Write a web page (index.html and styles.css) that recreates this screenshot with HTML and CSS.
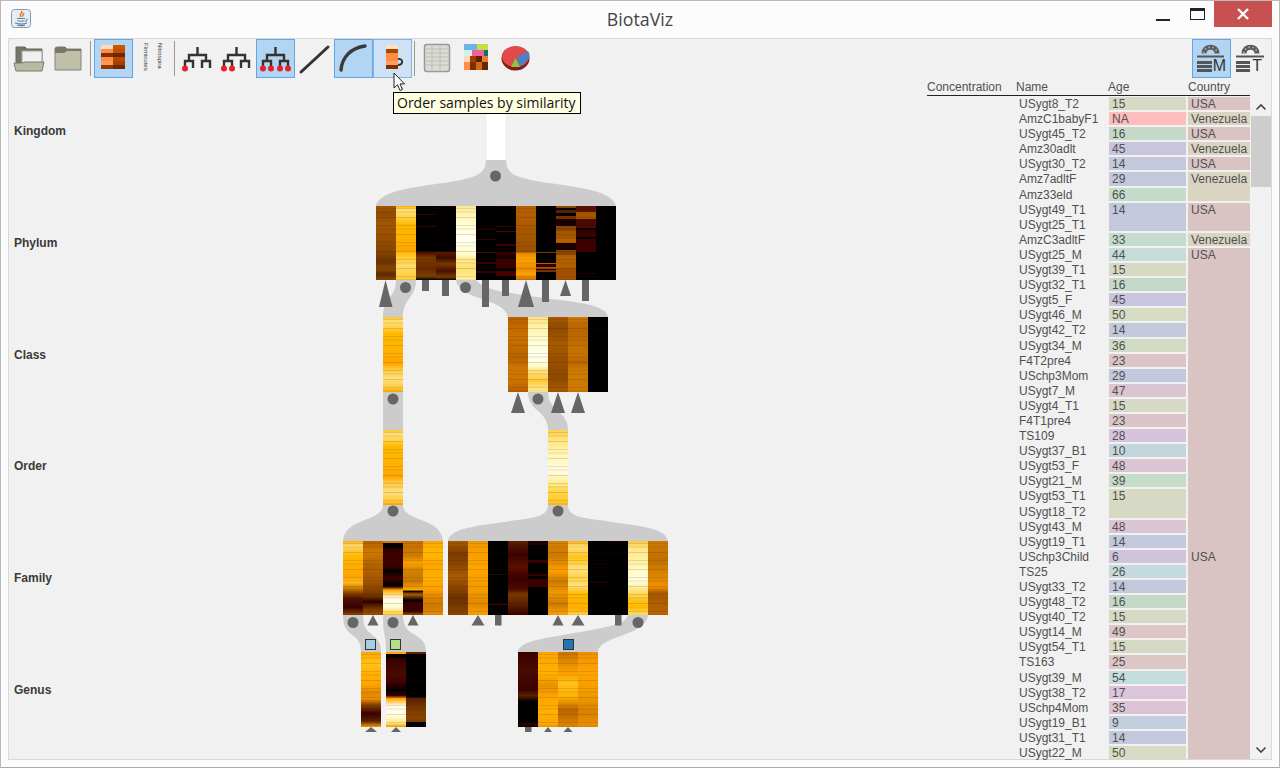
FILE: index.html
```html
<!DOCTYPE html>
<html lang="en">
<head>
  <meta charset="UTF-8">
  <title>BiotaViz</title>
  <link rel="stylesheet" href="styles.css">
</head>
<body>
<div class="window">

  <div class="titlebar">
    <svg class="app-icon" width="22" height="22" viewBox="0 0 22 22">
      <rect x="1.500" y="1.500" width="19" height="18" rx="3" fill="#e6edf3" stroke="#7f9bb5"/>
      <path d="M11.500 3c2 2-3 3-1 6M13.500 5c1 2-2 2-1 4" stroke="#e8792a" stroke-width="1.600" fill="none"/>
      <path d="M7 10.500h8M7.500 12.500c1 1 6 1 7 0M16 11c2 0 1.500 2-1 2.500" stroke="#5d7f9e" stroke-width="1" fill="none"/>
      <path d="M5 15c4 1.200 9 1.200 12 0M7 17c3 .800 6 .800 8 0" stroke="#5d7f9e" stroke-width="1.200" fill="none"/>
    </svg>
    <div class="title">BiotaViz</div>
    <div class="win-btns">
      <div class="win-btn"><div class="min-mark"></div></div>
      <div class="win-btn"><div class="max-mark"></div></div>
      <div class="win-close">
        <svg width="14" height="12" viewBox="0 0 14 12"><path d="M2 1l10 10M12 1L2 11" stroke="#fff" stroke-width="2.400"/></svg>
      </div>
    </div>
  </div>

  <div class="panel">
    <div class="toolbar">
      <div class="tool">
        <svg width="39" height="39" viewBox="0 0 39 39">
          <path d="M7 28V8h9l2 2h15v18z" fill="#75756a" stroke="#66665a"/>
          <rect x="13" y="12" width="20" height="12" fill="#f0f0ee" stroke="#a5a59a"/>
          <path d="M5 24h9l1-1h20l-2 9H7z" fill="#b9b9a4" stroke="#7d7d70"/>
        </svg>
      </div>
      <div class="tool">
        <svg width="39" height="39" viewBox="0 0 39 39">
          <path d="M7 31V9l2-1h8l2 2h14v21z" fill="#c0c0a9" stroke="#85857a"/>
          <path d="M7 14V9l2-1h8l2 2h14v2H19l-3 2z" fill="#77776a"/>
        </svg>
      </div>
      <div class="sep"></div>
      <div class="tool selected">
        <svg width="37" height="37" viewBox="0 0 37 37">
          <rect x="6" y="5" width="12" height="4" fill="#fcdcc4"/><rect x="18" y="5" width="12" height="4" fill="#cc5500"/>
          <rect x="6" y="9" width="12" height="4" fill="#ff8c42"/><rect x="18" y="9" width="12" height="4" fill="#c44f00"/>
          <rect x="6" y="13" width="12" height="4" fill="#7f3000"/><rect x="18" y="13" width="12" height="4" fill="#702800"/>
          <rect x="6" y="17" width="12" height="4" fill="#ff8c42"/><rect x="18" y="17" width="12" height="4" fill="#b84a00"/>
          <rect x="6" y="21" width="12" height="4" fill="#ff9c52"/><rect x="18" y="21" width="12" height="4" fill="#a64000"/>
          <rect x="6" y="25" width="12" height="4" fill="#8f3a00"/><rect x="18" y="25" width="12" height="4" fill="#702800"/>
        </svg>
      </div>
      <div class="tool tool-names">
        <span class="tiny-name">Firmicutes</span>
        <span class="tiny-name">Nitrospira</span>
      </div>
      <div class="sep sep-tree"></div>
      <div class="tool">
        <svg width="39" height="39" viewBox="0 0 39 39">
          <path class="tree-line" d="M19.500 8v8M11 21v-5h17v5M7 29v-7h8v7M24 29v-7h8v7"/>
          <circle class="tree-dot" cx="7" cy="29.500" r="3"/>
        </svg>
      </div>
      <div class="tool">
        <svg width="39" height="39" viewBox="0 0 39 39">
          <path class="tree-line" d="M19.500 8v8M11 21v-5h17v5M7 29v-7h8v7M24 29v-7h8v7"/>
          <circle class="tree-dot" cx="7" cy="29.500" r="3"/><circle class="tree-dot" cx="15" cy="29.500" r="3"/>
        </svg>
      </div>
      <div class="tool selected">
        <svg width="37" height="37" viewBox="0 0 37 37">
          <path class="tree-line" d="M18.500 7v8M10 20v-5h17v5M6 28v-7h8v7M23 28v-7h8v7"/>
          <circle class="tree-dot" cx="6" cy="28.500" r="3"/><circle class="tree-dot" cx="14" cy="28.500" r="3"/>
          <circle class="tree-dot" cx="23" cy="28.500" r="3"/><circle class="tree-dot" cx="31" cy="28.500" r="3"/>
        </svg>
      </div>
      <div class="tool">
        <svg width="39" height="39" viewBox="0 0 39 39"><path d="M6 33L33 8" stroke="#333" stroke-width="3" stroke-linecap="round"/></svg>
      </div>
      <div class="tool selected">
        <svg width="37" height="37" viewBox="0 0 37 37"><path d="M6 30C7 17 16 8 30 6" stroke="#3a3a3a" stroke-width="3.500" stroke-linecap="round" fill="none"/></svg>
      </div>
      <div class="tool hovered">
        <svg width="37" height="37" viewBox="0 0 37 37">
          <rect x="12" y="5" width="12" height="4" fill="#fce0c8"/>
          <rect x="12" y="9" width="12" height="4" fill="#a84800"/>
          <rect x="12" y="13" width="12" height="4" fill="#ff8c42"/>
          <rect x="12" y="17" width="12" height="4" fill="#ff8c42"/>
          <rect x="12" y="21" width="12" height="4" fill="#ffa060"/>
          <rect x="12" y="25" width="12" height="4" fill="#7f3000"/>
          <path d="M24 19c5-1 6 6 0 6" stroke="#333" stroke-width="2" fill="none"/>
        </svg>
      </div>
      <div class="sep sep-views"></div>
      <div class="tool">
        <svg width="39" height="39" viewBox="0 0 39 39">
          <rect x="6.500" y="5.500" width="25" height="27" rx="2.500" fill="#dcdcd6" stroke="#999" stroke-width="1.500"/>
          <path d="M8 10h22M8 14h22M8 18h22M8 22h22M8 26h22M14 7v24M22 7v24" stroke="#bdbdb8"/>
        </svg>
      </div>
      <div class="tool">
        <svg width="39" height="39" viewBox="0 0 39 39">
          <rect x="7" y="5" width="13" height="6" fill="#6cb4e8"/><rect x="20" y="5" width="11" height="6" fill="#c4e03c"/>
          <rect x="7" y="11" width="8" height="6" fill="#d4f2e4"/><rect x="15" y="11" width="12" height="6" fill="#f060a0"/><rect x="27" y="11" width="4" height="6" fill="#107070"/>
          <rect x="7" y="17" width="24" height="14" fill="#b85a10"/>
          <rect x="7" y="17" width="6" height="6" fill="#fcd8b8"/><rect x="13" y="17" width="6" height="6" fill="#a04000"/><rect x="19" y="17" width="6" height="6" fill="#602000"/><rect x="25" y="17" width="6" height="6" fill="#e88030"/>
          <rect x="7" y="23" width="6" height="8" fill="#ff9040"/><rect x="13" y="23" width="6" height="8" fill="#7a3000"/><rect x="19" y="23" width="6" height="8" fill="#d06818"/><rect x="25" y="23" width="6" height="8" fill="#6a2800"/>
        </svg>
      </div>
      <div class="tool">
        <svg width="39" height="39" viewBox="0 0 39 39">
          <ellipse cx="19.500" cy="19.500" rx="14" ry="12" fill="#8a1818"/>
          <ellipse cx="19.500" cy="17.500" rx="13.500" ry="10.500" fill="#e04a4a"/>
          <path d="M21 18L32 12c2 3 2 6 0 9l-5 5-5 2z" fill="#4f7fc0"/>
          <path d="M19.500 19l4.500 9h-9z" fill="#8cc63f"/>
        </svg>
      </div>
      <div class="tool-gap"></div>
      <div class="tool selected">
        <svg width="37" height="37" viewBox="0 0 37 37">
          <path class="dome" d="M11 13.500C11 5 24 5 24 13.500"/>
          <path class="dome-beads" d="M11 13.500C11 5 24 5 24 13.500"/>
          <path class="bar" d="M4 16.500h27"/>
          <path class="bar-thick" d="M4 22.500h15M4 26.500h15M4 30.500h15"/>
        </svg>
        <span class="mode-letter letter-m">M</span>
      </div>
      <div class="tool tool-last">
        <svg width="39" height="39" viewBox="0 0 39 39">
          <path class="dome" d="M13 14.500C13 6 26 6 26 14.500"/>
          <path class="dome-beads" d="M13 14.500C13 6 26 6 26 14.500"/>
          <path class="bar" d="M5 17.500h28"/>
          <path class="bar-thick" d="M5 23.500h14M5 27.500h14M5 31.500h14"/>
        </svg>
        <span class="mode-letter letter-t">T</span>
      </div>
    </div>

    <div class="main">
      <div class="canvas">
        <div class="ranks">
          <div class="rank">Kingdom</div>
          <div class="rank">Phylum</div>
          <div class="rank">Class</div>
          <div class="rank">Order</div>
          <div class="rank">Family</div>
          <div class="rank">Genus</div>
        </div>

        <svg class="links" width="910" height="653" viewBox="9 79 910 653">
          <rect x="486" y="100" width="20" height="66" fill="#fff" stroke="#e2e2e2" stroke-width="0.500"/>
          <g fill="#cccccc">
            <path d="M486 160C486 172 478 176 465 179C440 186 380 186 376 206H616C612 186 552 186 527 179C514 176 506 172 506 160Z"/>
            <path d="M396 280C396 298 383 298 383 317H403C403 298 416 298 416 280Z"/>
            <path d="M456 280C458 300 505 298 508 317H608C606 303 570 302 530 296C500 291 484 290 476 280Z"/>
            <rect x="383" y="392" width="20" height="38"/>
            <path d="M528 392C528 412 548 410 548 430H568C568 410 548 412 548 392Z"/>
            <path d="M383 505C383 522 345 517 343 541H443C441 517 403 522 403 505Z"/>
            <path d="M548 505C548 518 530 518 510 521C480 526 450 527 448 541H668C666 527 636 526 606 521C586 518 568 518 568 505Z"/>
            <path d="M343 615C343 640 361 630 361 652H381C381 630 363 640 363 615Z"/>
            <path d="M383 615C383 640 386 630 386 652H426C426 630 403 640 403 615Z"/>
            <path d="M628 615C626 624 610 627 563 635C535 640 520 642 518 652H598C598 636 646 636 648 615Z"/>
          </g>
          <g fill="#666666">
            <circle cx="495.500" cy="176" r="5.500"/>
            <circle cx="405.500" cy="287.500" r="5.500"/>
            <circle cx="465.500" cy="287.500" r="5.500"/>
            <circle cx="393" cy="399" r="5.500"/>
            <circle cx="538" cy="399" r="5.500"/>
            <circle cx="393" cy="511" r="5.500"/>
            <circle cx="558" cy="511" r="5.500"/>
            <circle cx="353" cy="622.500" r="5.500"/>
            <circle cx="393" cy="622.500" r="5.500"/>
            <circle cx="638" cy="622.500" r="5.500"/>
            <!-- collapsed phylum children -->
            <path d="M385.500 280L392.500 307H379Z"/>
            <rect x="422" y="280" width="7" height="11"/>
            <rect x="442" y="280" width="7" height="16"/>
            <rect x="482" y="280" width="7" height="27"/>
            <rect x="502" y="280" width="7" height="16"/>
            <path d="M526 280L534 307H518Z"/>
            <rect x="542" y="280" width="7" height="22"/>
            <path d="M565.500 280L571 296H560Z"/>
            <rect x="582" y="280" width="7" height="21"/>
            <!-- class -->
            <path d="M518 392L525 413H511Z"/>
            <path d="M558 392L565 413H551Z"/>
            <path d="M578 392L585 413H571Z"/>
            <!-- family -->
            <path d="M373 615L378.500 625.500H367.500Z"/>
            <path d="M413 615L418.500 625.500H407.500Z"/>
            <path d="M478 615L484.500 625.500H471.500Z"/>
            <rect x="495" y="615" width="6.500" height="10.500"/>
            <path d="M558 615L563.500 625.500H552.500Z"/>
            <path d="M578 615L584.500 625.500H571.500Z"/>
            <rect x="615" y="615" width="6.500" height="10.500"/>
            <!-- genus -->
            <path d="M371 727L377 732H365Z"/>
            <path d="M396 727L401 732H391Z"/>
            <rect x="525" y="727" width="6.500" height="5"/>
            <path d="M548 727L552 732H544Z"/>
            <path d="M568 727L572.500 732H563.500Z"/>
          </g>
          <g stroke="#333" stroke-width="1">
            <rect x="365.500" y="639.500" width="10" height="10" fill="#a6cee3"/>
            <rect x="390.500" y="639.500" width="10" height="10" fill="#b2df8a"/>
            <rect x="563.500" y="639.500" width="10" height="10" fill="#1f78b4"/>
          </g>
        </svg>

        <div class="heat node-phylum">
          <div class="hc p1"></div><div class="hc p2"></div><div class="hc p3"></div><div class="hc p4"></div>
          <div class="hc p5"></div><div class="hc p6"></div><div class="hc p7"></div><div class="hc p8"></div>
          <div class="hc p9"></div><div class="hc p10"></div><div class="hc p11"></div><div class="hc p12"></div>
        </div>
        <div class="heat node-class-a"><div class="hc c1"></div></div>
        <div class="heat node-class-b">
          <div class="hc c2"></div><div class="hc c3"></div><div class="hc c4"></div><div class="hc c5"></div><div class="hc p12"></div>
        </div>
        <div class="heat node-order-a"><div class="hc o1"></div></div>
        <div class="heat node-order-b"><div class="hc o2"></div></div>
        <div class="heat node-family-a">
          <div class="hc f1"></div><div class="hc f2"></div><div class="hc f3"></div><div class="hc f4"></div><div class="hc f5"></div>
        </div>
        <div class="heat node-family-b">
          <div class="hc g1"></div><div class="hc g2"></div><div class="hc g3"></div><div class="hc g4"></div>
          <div class="hc g5"></div><div class="hc g6"></div><div class="hc g7"></div><div class="hc g8"></div>
          <div class="hc g9"></div><div class="hc g10"></div><div class="hc g11"></div>
        </div>
        <div class="heat node-genus-a"><div class="hc n1"></div></div>
        <div class="heat node-genus-b"><div class="hc n2"></div><div class="hc n3"></div></div>
        <div class="heat node-genus-c">
          <div class="hc n4"></div><div class="hc n5"></div><div class="hc n6"></div><div class="hc n7"></div>
        </div>
      </div>

      <div class="side">
        <div class="side-head">
          <div class="head-conc">Concentration</div>
          <div class="head-name">Name</div>
          <div class="head-age">Age</div>
          <div class="head-country">Country</div>
        </div>
        <div class="side-body">
          <div class="samples">
            <div class="name">USygt8_T2</div><div class="age a15">15</div><div class="country usa">USA</div>
            <div class="name">AmzC1babyF1</div><div class="age ana">NA</div><div class="country ven">Venezuela</div>
            <div class="name">USygt45_T2</div><div class="age a16">16</div><div class="country usa">USA</div>
            <div class="name">Amz30adlt</div><div class="age a45">45</div><div class="country ven">Venezuela</div>
            <div class="name">USygt30_T2</div><div class="age a14">14</div><div class="country usa">USA</div>
            <div class="name">Amz7adltF</div><div class="age a29">29</div><div class="country ven span2">Venezuela</div>
            <div class="name">Amz33eld</div><div class="age a66">66</div>
            <div class="name">USygt49_T1</div><div class="age a14 span2">14</div><div class="country usa span2">USA</div>
            <div class="name">USygt25_T1</div>
            <div class="name">AmzC3adltF</div><div class="age a33">33</div><div class="country ven">Venezuela</div>
            <div class="name">USygt25_M</div><div class="age a44">44</div>
            <div class="country usa span34"><div class="usa-first">USA</div><div>USA</div></div>
            <div class="name">USygt39_T1</div><div class="age a15">15</div>
            <div class="name">USygt32_T1</div><div class="age a16">16</div>
            <div class="name">USygt5_F</div><div class="age a45">45</div>
            <div class="name">USygt46_M</div><div class="age a50">50</div>
            <div class="name">USygt42_T2</div><div class="age a14">14</div>
            <div class="name">USygt34_M</div><div class="age a36">36</div>
            <div class="name">F4T2pre4</div><div class="age a23">23</div>
            <div class="name">USchp3Mom</div><div class="age a29">29</div>
            <div class="name">USygt7_M</div><div class="age a47">47</div>
            <div class="name">USygt4_T1</div><div class="age a15">15</div>
            <div class="name">F4T1pre4</div><div class="age a23">23</div>
            <div class="name">TS109</div><div class="age a28">28</div>
            <div class="name">USygt37_B1</div><div class="age a10">10</div>
            <div class="name">USygt53_F</div><div class="age a48">48</div>
            <div class="name">USygt21_M</div><div class="age a39">39</div>
            <div class="name">USygt53_T1</div><div class="age a15 span2">15</div>
            <div class="name">USygt18_T2</div>
            <div class="name">USygt43_M</div><div class="age a48">48</div>
            <div class="name">USygt19_T1</div><div class="age a14">14</div>
            <div class="name">USchp3Child</div><div class="age a6">6</div>
            <div class="name">TS25</div><div class="age a26">26</div>
            <div class="name">USygt33_T2</div><div class="age a14">14</div>
            <div class="name">USygt48_T2</div><div class="age a16">16</div>
            <div class="name">USygt40_T2</div><div class="age a15">15</div>
            <div class="name">USygt14_M</div><div class="age a49">49</div>
            <div class="name">USygt54_T1</div><div class="age a15">15</div>
            <div class="name">TS163</div><div class="age a25">25</div>
            <div class="name">USygt39_M</div><div class="age a54">54</div>
            <div class="name">USygt38_T2</div><div class="age a17">17</div>
            <div class="name">USchp4Mom</div><div class="age a35">35</div>
            <div class="name">USygt19_B1</div><div class="age a9">9</div>
            <div class="name">USygt31_T1</div><div class="age a14">14</div>
            <div class="name">USygt22_M</div><div class="age a50">50</div>
          </div>
          <div class="scrollbar">
            <div class="scroll-btn"><svg width="12" height="8" viewBox="0 0 12 8"><path d="M1.500 6.500L6 2l4.500 4.500" stroke="#444" stroke-width="1.600" fill="none"/></svg></div>
            <div class="scroll-thumb"></div>
            <div class="scroll-track"></div>
            <div class="scroll-btn"><svg width="12" height="8" viewBox="0 0 12 8"><path d="M1.500 1.500L6 6l4.500-4.500" stroke="#444" stroke-width="1.600" fill="none"/></svg></div>
          </div>
        </div>
      </div>
    </div>
  </div>

  <svg class="cursor" width="13" height="20" viewBox="0 0 13 20">
    <path d="M1 1v15l3.500-3.200 2.500 5.700 2.500-1.100-2.500-5.500h4.500z" fill="#fff" stroke="#222" stroke-width="1"/>
  </svg>
  <div class="tooltip">Order samples by similarity</div>
</div>
</body>
</html>
```

FILE: styles.css
```css
html, body {
  margin: 0;
  padding: 0;
  overflow: hidden;
}

body {
  font-family: "Liberation Sans", Arial, sans-serif;
  background: #fcfcfc;
}

.window {
  position: relative;
  box-sizing: border-box;
  width: 1280px;
  height: 768px;
  border: 1px solid #b9b9b9;
  border-bottom-color: #a9a9a9;
  background: #fcfcfc;
  display: flex;
  flex-direction: column;
  overflow: hidden;
}

/* title bar */
.titlebar {
  height: 37px;
  flex: none;
  display: flex;
  align-items: flex-start;
  position: relative;
}

.app-icon {
  margin: 7px 0 0 9px;
}

.title {
  position: absolute;
  left: 0;
  right: 0;
  top: 6px;
  text-align: center;
  font-family: "Open Sans", sans-serif;
  font-size: 17.800px;
  line-height: 24px;
  color: #444;
}

.win-btns {
  margin-left: auto;
  margin-right: 7px;
  display: flex;
}

.win-btn {
  width: 34px;
  height: 26px;
  display: flex;
  align-items: center;
  justify-content: center;
}

.min-mark {
  width: 14px;
  height: 2px;
  background: #222;
  margin-top: 11px;
}

.max-mark {
  box-sizing: border-box;
  width: 15px;
  height: 12px;
  border: 1px solid #222;
  border-top-width: 3px;
  margin-top: -1px;
}

.win-close {
  width: 58px;
  height: 26px;
  background: #c75050;
  display: flex;
  align-items: center;
  justify-content: center;
}

/* main panel */
.panel {
  flex: 1;
  min-height: 0;
  margin: 0 7px 7px 7px;
  border: 1px solid #d9d9d9;
  background: #f1f1f1;
  display: flex;
  flex-direction: column;
}

.toolbar {
  height: 40px;
  flex: none;
  display: flex;
}

.tool {
  position: relative;
  box-sizing: border-box;
  width: 39px;
  height: 39px;
  flex: none;
  display: flex;
  align-items: center;
  justify-content: center;
}

.tool.selected {
  background: #b3d5f4;
  border: 1px solid #64a5e6;
}

.tool.hovered {
  background: #cfe2f5;
  border: 1px solid #86b4e2;
}

.tool-names {
  gap: 6px;
  align-items: flex-start;
  padding-top: 4px;
}

.tiny-name {
  writing-mode: vertical-rl;
  font-size: 6px;
  line-height: 8px;
  color: #333;
}

.sep {
  width: 1px;
  height: 35px;
  margin: 2px 3px;
  background: #999;
  flex: none;
}

.sep-tree {
  margin-left: 2px;
}

.sep-views {
  margin-left: 2px;
}

.tool-gap {
  flex: 1;
}

.tool-last {
  margin-right: 1px;
}

.tree-line {
  stroke: #333;
  stroke-width: 2.400;
  fill: none;
}

.tree-dot {
  fill: #e8202a;
}

.dome {
  stroke: #5c5c5c;
  stroke-width: 5;
  fill: none;
}

.dome-beads {
  stroke: #b5b5b5;
  stroke-width: 1.500;
  stroke-dasharray: 1.500 2.500;
  fill: none;
}

.bar {
  stroke: #555;
  stroke-width: 2;
}

.bar-thick {
  stroke: #555;
  stroke-width: 3;
}

.mode-letter {
  position: absolute;
  bottom: 3px;
  font-size: 16px;
  line-height: 16px;
  color: #333;
}

.letter-m {
  right: 4px;
}

.letter-t {
  right: 8px;
  bottom: 4px;
}

.main {
  flex: 1;
  min-height: 0;
  display: flex;
}

/* tree canvas */
.canvas {
  position: relative;
  flex: 1;
  min-width: 0;
}

.ranks {
  display: grid;
  grid-auto-rows: 111.8px;
  padding: 45px 0 0 5px;
}

.rank {
  font-size: 12px;
  font-weight: bold;
  line-height: 14px;
  color: #3a3a3a;
}

.links {
  position: absolute;
  left: 0;
  top: 0;
}

.heat {
  position: absolute;
  display: flex;
}

.node-phylum { left: 367px; top: 127px; height: 74px; }
.node-class-a { left: 374px; top: 238px; height: 75px; }
.node-class-b { left: 499px; top: 238px; height: 75px; }
.node-order-a { left: 374px; top: 351px; height: 75px; }
.node-order-b { left: 539px; top: 351px; height: 75px; }
.node-family-a { left: 334px; top: 462px; height: 74px; }
.node-family-b { left: 439px; top: 462px; height: 74px; }
.node-genus-a { left: 352px; top: 573px; height: 75px; }
.node-genus-b { left: 377px; top: 573px; height: 75px; }
.node-genus-c { left: 509px; top: 573px; height: 75px; }

.hc {
  position: relative;
  width: 20px;
  background: #000;
}

.hc::after {
  content: "";
  position: absolute;
  inset: 0;
  background: repeating-linear-gradient(to bottom,
    transparent 0 2px, rgba(60,20,0,.12) 2px 3px,
    transparent 3px 5px, rgba(60,20,0,.06) 5px 7px,
    transparent 7px 11px, rgba(60,20,0,.15) 11px 12px,
    transparent 12px 17px);
}

/* phylum columns */
.p1 { background: linear-gradient(#a35500, #8f4a00 10%, #a35500 25%, #8f4c00 50%, #8a4600 60%, #6a3300 75%, #8a4800 85%, #5a2a00 92%, #8a4800); }
.p2 { background: linear-gradient(#ffae00, #ffe27a 5%, #ffd24a 15%, #ffb800 25%, #ffb000 50%, #ffa500 60%, #ffc21a 65%, #ffdc6a 80%, #ffc83a); }
.p3 { background: linear-gradient(#000 11%, #3a0000 11% 12%, #000 12% 27%, #3a0000 27% 28%, #000 28% 61%, #4a0a00 62%, #7a3a00 70%, #6a2a00 85%, #7a4000 95%, #000); }
.p4 { background: linear-gradient(#1a0000 0 2%, #000 2% 61%, #5a1a00 63%, #3a0a00 70%, #7a3800 78%, #4a1000 88%, #7a4000 96%, #000); }
.p5 { background: linear-gradient(#ffe88a, #fff5b0 10%, #fffcd0 25%, #ffffee 45%, #fffcd0 65%, #ffe88a 72%, #ffe070 85%, #fff0a0); }
.p6 { background: linear-gradient(#000 31%, #3a0000 31% 32%, #000 32% 45%, #3a0000 45% 46%, #000 46% 62%, #4a0a00 62% 63%, #000 63% 76%, #3a0000 76% 78%, #000 78% 88%, #3a0000 88% 91%, #000 91%); }
.p7 { background: linear-gradient(#1a0000 0 2%, #000 2% 27%, #3a0000 27% 28%, #000 28% 34%, #4a0a00 34% 35%, #000 35% 52%, #3a0000 52% 54%, #000 54% 62%, #3a0000 62% 66%, #1a0000 66% 72%, #3a0000 72% 84%, #000 84% 88%, #4a0000 88% 94%, #000 94%); }
.p8 { background: linear-gradient(#b86000, #a85a00 30%, #9a5000 62%, #e08a00 64%, #ffa500 72%, #e88a00 85%, #ffa000 92%, #c87000); }
.p9 { background: linear-gradient(#000 62%, #7a3a00 62% 63%, #000 63% 77%, #b86000 77% 79%, #3a0000 79% 82%, #a85000 82% 85%, #000 85% 87%, #7a3000 87% 89%, #000 89%); }
.p10 { background: linear-gradient(#8a4500 0 3%, #000 3% 5%, #5a2000 5% 10%, #000 10% 14%, #7a3000 14% 18%, #1a0000 18% 27%, #8a4500 27% 34%, #a35500 34% 45%, #b86000 45% 50%, #1a0000 50% 60%, #8a4500 60% 66%, #b06000 66% 84%, #a05000 84%); }
.p11 { background: linear-gradient(#5a1000 0 8%, #a35500 8% 18%, #4a0a00 18% 30%, #000 30% 32%, #5a2a00 32% 33%, #3a0000 33% 42%, #000 42% 45%, #3a0000 45% 62%, #000 62% 90%, #2a0000 90% 92%, #000 92%); }
.p12 { background: #000; }

/* class and order */
.c1, .o1 { background: linear-gradient(#ffc21a, #ffe27a 5%, #ffd24a 14%, #ffb800 22%, #ffb000 50%, #ffa500 62%, #ffc83a 70%, #ffe080 82%, #ffcc40 94%, #ffb000); }
.c2 { background: linear-gradient(#b86000, #c87000 25%, #b86400 55%, #d07800 70%, #c87400 85%, #b86000); }
.c3 { background: linear-gradient(#ffe27a, #fff0a0 10%, #fffcd0 30%, #ffffee 50%, #fffcd0 65%, #ffe27a 72%, #ffc83a 85%, #fff0a0); }
.c4 { background: linear-gradient(#a85a00, #8f4a00 15%, #a85a00 35%, #9a5000 55%, #8f4a00 80%, #a85a00); }
.c5 { background: linear-gradient(#cc7a00, #b86400 15%, #c87400 50%, #b86400 60%, #cc7a00 70%); }
.o2 { background: linear-gradient(#ffd24a, #ffe27a 12%, #fff5b0 30%, #fffde0 55%, #fff0a0 68%, #ffd850 80%, #ffc21a); }

/* family */
.f1 { background: linear-gradient(#ffb000, #ffd870 6%, #ffb800 20%, #ffa500 48%, #ffb820 56%, #cc7a00 64%, #8a4500 70%, #4a1000 78%, #3a0000 90%, #8a4500); }
.f2 { background: linear-gradient(#b86000, #cc7a00 15%, #b06000 35%, #a85a00 50%, #8a4500 65%, #6a3000 75%, #2a0000 82%, #7a3800 92%, #a05000); }
.f3 { background: linear-gradient(#cc7a00 0 3%, #000 3% 8%, #3a0000 12%, #3a0000 35%, #000 40%, #3a0000 50%, #000 60%, #3a0000 62%, #ffa500 66%, #ffd870 72%, #fffde8 78%, #fffde0 88%, #ffe88a 94%, #ffc21a); }
.f4 { background: linear-gradient(#c87000, #cc7a00 20%, #ffa500 30%, #d08000 40%, #cc7a00 55%, #ffa500 66%, #000 68%, #b86000 72%, #000 80%, #3a0000 84%, #3a0000 95%, #a05000); }
.f5 { background: linear-gradient(#ffa500, #ffb800 15%, #ffa500 32%, #ffb000 50%, #ffa000 65%, #d88000 78%, #cc7a00 90%, #e88a00); }
.g1 { background: linear-gradient(#a85a00, #7a3a00 18%, #8f4a00 35%, #a85a00 48%, #8f4a00 60%, #6a3000 78%, #8a4500); }
.g2 { background: linear-gradient(#f09800, #ffa500 35%, #f09800 70%, #e08800 85%, #ffa000); }
.g3 { background: linear-gradient(#000 44%, #3a0000 45%, #000 46% 78%, #3a0000 78% 79%, #000 79% 85%, #4a0000 85% 86%, #000 86%); }
.g4 { background: linear-gradient(#5a2000, #3a0000 18%, #5a1000 35%, #3a0000 50%, #4a0a00 65%, #7a3a00 72%, #5a2000 85%, #3a0000); }
.g5 { background: linear-gradient(#1a0000 0 6%, #000 6% 26%, #3a0000 26% 30%, #000 30% 44%, #3a0000 44% 47%, #000 47% 51%, #7a3a00 51% 52%, #3a0000 52% 62%, #000 62%); }
.g6 { background: linear-gradient(#d88000, #cc7a00 20%, #ffa000 40%, #cc7a00 55%, #f09800 70%, #cc7a00 85%, #ffa000); }
.g7 { background: linear-gradient(#ffb000, #ffe080 8%, #ffc21a 22%, #ffe27a 38%, #ffd24a 50%, #ffe27a 60%, #ffb800 72%, #ffae00 92%, #ffd24a); }
.g8 { background: linear-gradient(#000 30%, #1a0000 31%, #000 32% 56%, #2a0000 56% 57%, #000 57%); }
.g9 { background: linear-gradient(#1a0000 0 2%, #000 2% 44%, #1a0000 44% 45%, #000 45%); }
.g10 { background: linear-gradient(#ffc83a, #ffe88a 10%, #fff0a0 25%, #fffcd0 42%, #fffde0 55%, #ffe88a 65%, #ffc21a 80%, #ffb800 90%, #ffe27a); }
.g11 { background: linear-gradient(#cc7a00, #c07000 25%, #e08800 50%, #f09000 62%, #a85a00 70%, #b86400 100%); }

/* genus */
.n1 { background: linear-gradient(#ffa500, #ffc21a 15%, #ffb000 30%, #ffa500 42%, #e08800 55%, #f09000 62%, #8a4500 70%, #3a0000 82%, #5a2000 92%, #ffa000); }
.n2 { background: linear-gradient(#ffa500 0 3%, #000 3% 6%, #3a0000 10%, #4a0a00 30%, #3a0000 42%, #000 50%, #3a0000 58%, #ffa500 62%, #fffde8 72%, #fffde0 85%, #ffe88a 94%, #ffa500); }
.n3 { background: linear-gradient(#5a2000 0 3%, #000 3% 60%, #5a2000 62%, #7a3a00 75%, #8a4500 88%, #7a3800 93%, #000 93%); }
.n4 { background: linear-gradient(#3a0000, #4a0a00 25%, #3a0000 50%, #5a2000 58%, #000 66%, #000 94%, #3a0000 96%, #000); }
.n5 { background: linear-gradient(#ffa500, #ffb000 30%, #e89000 45%, #ffa500 60%, #ffb000 80%, #ffa000); }
.n6 { background: linear-gradient(#c87400, #ffa500 30%, #ffc21a 42%, #ffb000 60%, #b86400 78%, #e08800 100%); }
.n7 { background: linear-gradient(#f09000, #ffa500 30%, #f09800 60%, #d88000 80%, #f09000); }

/* sample table */
.side {
  width: 344px;
  flex: none;
  display: flex;
  flex-direction: column;
  min-height: 0;
  font-size: 12px;
  color: #505050;
}

.side-head {
  display: grid;
  grid-template-columns: 89px 92px 80px 62px;
  height: 15px;
  margin-top: 1px;
  width: 323px;
  line-height: 15px;
  border-bottom: 1px solid #222;
}

.side-body {
  flex: 1;
  min-height: 0;
  display: flex;
  margin-top: 1px;
}

.samples {
  flex: none;
  width: 324px;
  display: grid;
  grid-template-columns: 89px 3px 89px 1px 77px 2px 62px 1px;
  grid-auto-rows: 15.100px;
  line-height: 15px;
}

.name {
  grid-column: 3;
}

.age {
  grid-column: 5;
  padding-left: 3px;
  margin-bottom: 2px;
}

.country {
  grid-column: 7;
  padding-left: 3px;
  margin-bottom: 2px;
  white-space: nowrap;
  overflow: hidden;
}

.span2 { grid-row: span 2; }
.span34 { grid-row: span 34; }

.usa { background: #d9c3c3; }
.ven { background: #dad4c3; }
.usa-first { margin-bottom: 287px; }

.ana { background: #ffbcbc; }
.a6 { background: #d0c4dc; }
.a9 { background: #c3cfdc; }
.a10 { background: #c3d6dc; }
.a14 { background: #c3c8dc; }
.a15 { background: #d6d9c4; }
.a16 { background: #c5d9c8; }
.a17 { background: #dcc4dc; }
.a23 { background: #dcc5c8; }
.a25 { background: #dcc6c6; }
.a26 { background: #c4dadc; }
.a28 { background: #d7c4dc; }
.a29 { background: #c3c8dd; }
.a33 { background: #c5dbcb; }
.a35 { background: #dcc4d4; }
.a36 { background: #d0dac4; }
.a39 { background: #c5dcc8; }
.a44 { background: #c5dcd9; }
.a45 { background: #c9c5dc; }
.a47 { background: #dbc5d0; }
.a48 { background: #dcc5d3; }
.a49 { background: #dcc6c6; }
.a50 { background: #d6dcc4; }
.a54 { background: #c4dcdc; }
.a66 { background: #c5dccb; }

.scrollbar {
  width: 20px;
  flex: none;
  display: flex;
  flex-direction: column;
}

.scroll-btn {
  height: 19px;
  flex: none;
  display: flex;
  align-items: center;
  justify-content: center;
}

.scroll-thumb {
  height: 71px;
  flex: none;
  background: #cdcdcd;
}

.scroll-track {
  flex: 1;
}

/* hover overlays */
.cursor {
  position: absolute;
  left: 392px;
  top: 71px;
}

.tooltip {
  position: absolute;
  left: 392px;
  top: 91px;
  box-sizing: border-box;
  width: 188px;
  height: 22px;
  padding-left: 3px;
  background: #ffffe1;
  border: 1px solid #000;
  font-family: "Open Sans", sans-serif;
  font-size: 14px;
  line-height: 20px;
  color: #111;
  white-space: nowrap;
}
```
